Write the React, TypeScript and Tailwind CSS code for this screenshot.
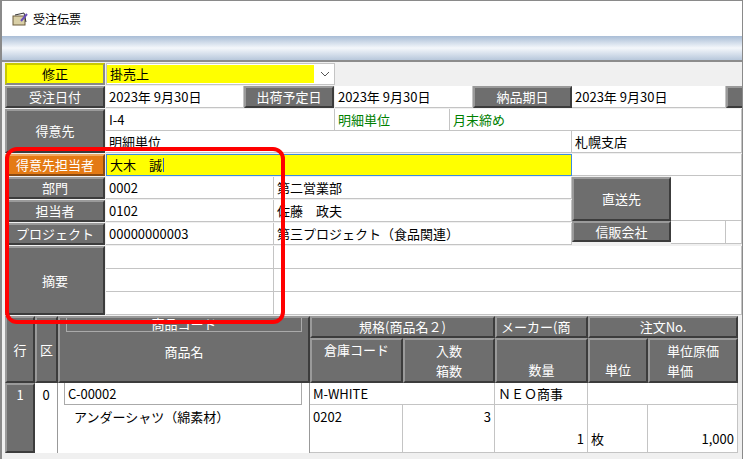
import React from "react";

const F = { fontFamily: '"Noto Sans CJK JP", "DejaVu Sans", sans-serif' };

function L({ w, h, children, cls = "" }: { w: number; h: number; children?: React.ReactNode; cls?: string }) {
  return (
    <div
      className={`flex items-center justify-center shrink-0 text-white text-[13px] bg-[#6e6e6e] border-2 border-t-[#9a9a9a] border-l-[#9a9a9a] border-b-[#3c3c3c] border-r-[#3c3c3c] ${cls}`}
      style={{ width: w, height: h }}
    >
      {children}
    </div>
  );
}

function V({ w, h, children, cls = "", green = false }: { w?: number; h: number; children?: React.ReactNode; cls?: string; green?: boolean }) {
  return (
    <div
      className={`flex items-center px-[3px] text-[13px] ${green ? "text-[#008000]" : "text-black"} bg-white border-r border-b border-[#c4c4c4] shrink-0 overflow-hidden whitespace-nowrap ${w ? "" : "flex-1"} ${cls}`}
      style={{ width: w, height: h }}
    >
      {children}
    </div>
  );
}

export default function App() {
  return (
    <div style={F} className="relative w-[743px] h-[459px] bg-[#f0f0f0] border-l-2 border-t border-r border-[#8a8a8a] overflow-hidden">
      <div className="h-[35px] bg-white flex items-center gap-[5px] pl-[10px]">
        <svg width="16" height="14" viewBox="0 0 16 14">
          <rect x="1" y="4" width="12" height="9" fill="#d9cfa6" stroke="#6b5a3a" />
          <path d="M3 3 L12 1 L14 10" fill="none" stroke="#333" />
          <path d="M9 9 L15 2" stroke="#6a4fb8" strokeWidth="2" />
        </svg>
        <span className="text-[12px] text-black">受注伝票</span>
      </div>
      <div className="h-[26px] bg-gradient-to-b from-[#a9bdd6] via-[#f4f7fb] to-[#b8c8dc] border-b-2 border-[#8c8c8c]" />
      <div className="pl-[3px] pt-[1px] flex flex-col">
        <div className="flex h-[23px]">
          <div className="w-[100px] h-[22px] bg-[#ffff00] border-2 border-t-[#c8c800] border-l-[#c8c800] border-b-[#888] border-r-[#888] flex items-center justify-center text-[13px]">修正</div>
          <div className="w-[229px] h-[22px] ml-[1px] bg-white flex items-center border border-[#c4c4c4]">
            <div className="w-[207px] h-[18px] bg-[#ffff00] text-[13px] px-[3px] flex items-center">掛売上</div>
            <svg className="ml-[6px]" width="10" height="6" viewBox="0 0 10 6"><path d="M1 1 L5 5 L9 1" fill="none" stroke="#555" /></svg>
          </div>
        </div>
        <div className="flex h-[23px]">
          <L w={100} h={22}>受注日付</L>
          <V w={138} h={22} cls="ml-[1px]">2023年 9月30日</V>
          <L w={90} h={22}>出荷予定日</L>
          <V w={138} h={22} cls="ml-[1px]">2023年 9月30日</V>
          <L w={99} h={22}>納品期日</L>
          <V w={154} h={22}>2023年 9月30日</V>
          <L w={20} h={22}></L>
        </div>
        <div className="flex h-[45px]">
          <L w={100} h={44}>得意先</L>
          <div className="flex flex-col flex-1 ml-[1px]">
            <div className="flex">
              <V w={229} h={22}>I-4</V>
              <V w={115} h={22} green>明細単位</V>
              <V h={22} green>月末締め</V>
            </div>
            <div className="flex">
              <V w={466} h={22}>明細単位</V>
              <V h={22}>札幌支店</V>
            </div>
          </div>
        </div>
        <div className="flex">
          <div className="flex flex-col">
            <div className="flex h-[23px]">
              <div className="w-[100px] h-[22px] bg-[#e47a14] text-white text-[13px] flex items-center justify-center border-2 border-t-[#f0a860] border-l-[#f0a860] border-b-[#8a4a10] border-r-[#8a4a10]">得意先担当者</div>
              <div className="w-[466px] h-[22px] ml-[1px] bg-[#ffff00] border border-[#3c8ce0] text-[13px] flex items-center px-[3px]">大木　誠<span className="w-[1px] h-[14px] bg-[#3060c0] ml-[1px]" /></div>
            </div>
            {[
              ["部門", "0002", "第二営業部"],
              ["担当者", "0102", "佐藤　政夫"],
              ["プロジェクト", "00000000003", "第三プロジェクト（食品関連）"],
            ].map(([a, b, c]) => (
              <div key={a} className="flex h-[23px]">
                <L w={100} h={22}>{a}</L>
                <V w={168} h={22} cls="ml-[1px]">{b}</V>
                <V w={298} h={22}>{c}</V>
              </div>
            ))}
          </div>
          <div className="flex flex-col flex-1">
            <V h={22} cls="!flex-none w-full" />
            <div className="flex h-[45px]">
              <L w={99} h={44} cls="mt-[1px]">直送先</L>
              <V h={45} />
            </div>
            <div className="flex h-[23px]">
              <L w={99} h={21}>信販会社</L>
              <V w={55} h={23} />
              <V h={23} />
            </div>
          </div>
        </div>
        <div className="flex h-[69px]">
          <L w={100} h={69}>摘要</L>
          <div className="flex flex-col flex-1 ml-[1px]">
            {[0, 1, 2].map((i) => (
              <div key={i} className="flex">
                <V w={168} h={23} />
                <V h={23} />
              </div>
            ))}
          </div>
        </div>
        <div className="flex h-[67px] mt-[1px]">
          <L w={30} h={67}>行</L>
          <L w={23} h={67}>区</L>
          <div className="w-[252px] h-[67px] bg-[#6e6e6e] border-2 border-t-[#9a9a9a] border-l-[#9a9a9a] border-b-[#3c3c3c] border-r-[#3c3c3c] flex flex-col items-center overflow-hidden">
            <div className="w-[236px] h-[20px] shrink-0 border border-[#aaa] -mt-[6px] text-white text-[13px] flex items-end justify-center leading-[14px] overflow-hidden">商品コード</div>
            <div className="text-white text-[13px] mt-[10px]">商品名</div>
          </div>
          <div className="flex flex-col">
            <div className="flex">
              <L w={185} h={22}>規格(商品名２)</L>
              <L w={93} h={22} cls="!justify-start pl-[4px]">メーカー(商</L>
              <L w={150} h={22}>注文No.</L>
            </div>
            <div className="flex">
              <L w={93} h={45} cls="!items-start">倉庫コード</L>
              <L w={92} h={45} cls="flex-col">入数<br />箱数</L>
              <L w={93} h={45} cls="!items-end pb-[2px]">数量</L>
              <L w={60} h={45} cls="!items-end pb-[2px]">単位</L>
              <L w={90} h={45} cls="flex-col">単位原価<br />単価</L>
            </div>
          </div>
        </div>
        <div className="flex h-[70px]">
          <L w={30} h={70} cls="!items-start">1</L>
          <div className="w-[23px] h-[70px] bg-white border-r border-[#999] text-[13px] flex justify-center pt-[2px]">0</div>
          <div className="w-[252px] h-[70px] bg-white border-r border-[#999] flex flex-col pl-[6px]">
            <div className="w-[238px] h-[22px] border border-[#aaa] border-t-0 text-[13px] flex items-center px-[3px]">C-00002</div>
            <div className="text-[13px] px-[10px] pt-[2px]">アンダーシャツ（綿素材）</div>
          </div>
          <div className="flex flex-col">
            <div className="flex">
              <V w={185} h={22}>M-WHITE</V>
              <V w={93} h={22}>ＮＥＯ商事</V>
              <V w={150} h={22} />
            </div>
            <div className="flex">
              <V w={93} h={48} cls="!items-start pt-[2px]">0202</V>
              <V w={92} h={48} cls="!items-start justify-end pt-[2px]">3</V>
              <V w={93} h={48} cls="!items-end justify-end pb-[4px]">1</V>
              <V w={60} h={48} cls="!items-end pb-[4px]">枚</V>
              <V w={90} h={48} cls="!items-end justify-end pb-[4px]">1,000</V>
            </div>
          </div>
        </div>
      </div>
      <div className="absolute left-[3px] top-[146px] w-[280px] h-[177px] border-[4px] border-[#ff0000] rounded-[12px] pointer-events-none" />
    </div>
  );
}
